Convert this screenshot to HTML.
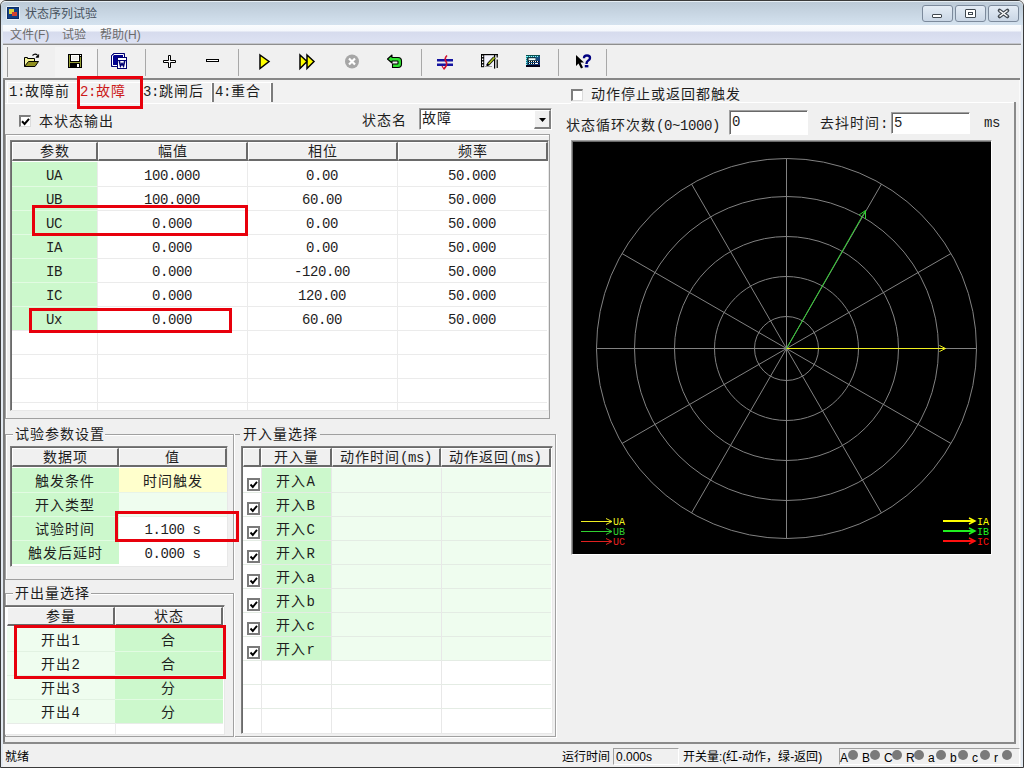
<!DOCTYPE html><html lang="zh-CN"><head><meta charset="utf-8"><style>
*{box-sizing:border-box;margin:0;padding:0}
html,body{width:1024px;height:768px;overflow:hidden;background:#f0f0f0}
body{position:relative;font-family:"Liberation Sans",sans-serif;font-size:12px;color:#000}
.a{position:absolute}
.s{position:absolute;font-family:"Liberation Mono",monospace;font-size:14px;letter-spacing:1px;line-height:16px;white-space:nowrap;color:#1e1e1e}
.s i{font-style:normal;font-size:14px;letter-spacing:-0.4px;position:relative;top:-0.5px}
.y{position:absolute;font-family:"Liberation Sans",sans-serif;font-size:12px;line-height:14px;white-space:nowrap}
.c{text-align:center;text-indent:-1px}
.red{position:absolute;border:3px solid #e8000c}
svg{position:absolute;overflow:visible}
</style></head><body>
<div class="a" style="left:0px;top:0px;width:1024px;height:768px;border:1px solid #3a3a3a;border-radius:6px 6px 0 0;background:#f0f0f0"></div>
<div class="a" style="left:1px;top:1px;width:1022px;height:24px;border-radius:5px 5px 0 0;background:linear-gradient(#bccad7,#d4e2ef);border-top:1px solid #e6eef4"></div>
<div class="a" style="left:1px;top:25px;width:2px;height:742px;background:#e2e9f1"></div>
<div class="a" style="left:1021px;top:25px;width:2px;height:742px;background:#e2e9f1"></div>
<div class="a" style="left:6px;top:6px;width:14px;height:14px;background:#e8f0f8;border-radius:2px"></div>
<div class="a" style="left:7px;top:7px;width:12px;height:12px;background:#123f86;border:1px solid #0b2e66"></div>
<div class="a" style="left:9px;top:9px;width:5px;height:5px;background:#d8d040"></div>
<div class="a" style="left:12px;top:12px;width:5px;height:4px;background:#d04030"></div>
<div class="y" style="left:25px;top:7px;color:#47525e">状态序列试验</div>
<div class="a" style="left:922px;top:5px;width:31px;height:17px;border:1px solid #7c8a9c;border-radius:3px;background:linear-gradient(#e4ecf5,#c9d6e5)"></div>
<div class="a" style="left:955px;top:5px;width:31px;height:17px;border:1px solid #7c8a9c;border-radius:3px;background:linear-gradient(#e4ecf5,#c9d6e5)"></div>
<div class="a" style="left:988px;top:5px;width:31px;height:17px;border:1px solid #7c8a9c;border-radius:3px;background:linear-gradient(#e4ecf5,#c9d6e5)"></div>
<div class="a" style="left:932px;top:14px;width:10px;height:4px;border:1px solid #404850;background:#fff;border-radius:1px"></div>
<div class="a" style="left:965px;top:9px;width:11px;height:9px;border:1px solid #404850;background:#fff;border-radius:1px"></div>
<div class="a" style="left:968px;top:12px;width:5px;height:3px;border:1px solid #404850"></div>
<svg style="left:996px;top:7px" width="16" height="13" viewBox="0 0 16 13"><path d="M3.5 3.5 L11.5 9.5 M11.5 3.5 L3.5 9.5" stroke="#404850" stroke-width="3.6" stroke-linecap="round"/><path d="M3.5 3.5 L11.5 9.5 M11.5 3.5 L3.5 9.5" stroke="#fff" stroke-width="1.5"/></svg>
<div class="a" style="left:3px;top:25px;width:1018px;height:19px;background:linear-gradient(#fafcfe 0,#f4f7fc 6px,#d6dbed 7px,#dee3f4 100%)"></div>
<div class="a" style="left:3px;top:43px;width:1018px;height:1px;background:#c4c6cc"></div>
<div class="a" style="left:3px;top:44px;width:1018px;height:1px;background:#8e8e8e"></div>
<div class="y" style="left:10px;top:28px;color:#6b6b6b">文件(F)</div>
<div class="y" style="left:62px;top:28px;color:#6b6b6b">试验</div>
<div class="y" style="left:100px;top:28px;color:#6b6b6b">帮助(H)</div>
<div class="a" style="left:3px;top:45px;width:1018px;height:33px;background:#f0f0f0"></div>
<div class="a" style="left:7px;top:47px;width:1px;height:30px;background:#9a9a9a"></div>
<div class="a" style="left:3px;top:78px;width:1017px;height:2px;background:#878787"></div>
<div class="a" style="left:97px;top:49px;width:1px;height:27px;background:#a8a8a8"></div>
<div class="a" style="left:145px;top:49px;width:1px;height:27px;background:#a8a8a8"></div>
<div class="a" style="left:238px;top:49px;width:1px;height:27px;background:#a8a8a8"></div>
<div class="a" style="left:421px;top:49px;width:1px;height:27px;background:#a8a8a8"></div>
<div class="a" style="left:558px;top:49px;width:1px;height:27px;background:#a8a8a8"></div>
<div class="a" style="left:606px;top:49px;width:1px;height:27px;background:#a8a8a8"></div>
<div class="a" style="left:55px;top:47px;width:42px;height:30px;background:#f4f4f4"></div>
<svg style="left:23px;top:53px" width="18" height="15" viewBox="0 0 18 15"><path d="M1.5 13.5V4.5H4.5V5.5H11.5V8.5" fill="#f4f49a" stroke="#000"/><path d="M1.5 13.5L5.5 8.5H15.5L12 13.5Z" fill="#909020" stroke="#000"/><path d="M9.5 2.5Q12 0 14.5 2.2" fill="none" stroke="#000" stroke-width="1.1"/><path d="M13 4.3H15.6V1.6Z" fill="#000" stroke="#000" stroke-width="0.8"/></svg>
<svg style="left:68px;top:54px" width="14" height="14" viewBox="0 0 14 14"><rect x="0" y="0" width="14" height="14" fill="#000"/><rect x="1" y="1" width="1" height="12" fill="#98a038"/><rect x="12" y="3" width="1" height="10" fill="#98a038"/><rect x="2" y="8" width="10" height="1" fill="#98a038"/><rect x="3" y="1" width="8" height="6" fill="#fff"/><rect x="4" y="2" width="6" height="4" fill="#eeeeea"/><rect x="9" y="10" width="2" height="3" fill="#fff"/><rect x="12" y="1" width="1" height="1" fill="#fff"/></svg>
<svg style="left:111px;top:53px" width="16" height="16" viewBox="0 0 16 16"><path d="M2.5 0.5H13.5V13.5H0.5V2.5Z" fill="#000090" stroke="#000070"/><path d="M3 1.5H12.5V12.5H1.5V3Z" fill="none" stroke="#fff" stroke-width="1"/><rect x="6" y="4" width="10" height="12" fill="#000070"/><rect x="7" y="5" width="8" height="2" fill="#fff"/><rect x="7" y="8" width="8" height="7" fill="#fff"/><path d="M8.3 8 L9.5 13 L11 10.5 L12.5 13 L13.7 8" fill="none" stroke="#000070" stroke-width="1.6"/></svg>
<svg style="left:163px;top:55px" width="13" height="13" viewBox="0 0 13 13"><path d="M5.5 0.5h2v5h5v2h-5v5h-2v-5h-5v-2h5z" fill="#fff" stroke="#000" stroke-width="1"/></svg>
<svg style="left:206px;top:59px" width="13" height="3" viewBox="0 0 13 3"><rect x="0.5" y="0.5" width="12" height="2" fill="#fff" stroke="#000"/></svg>
<svg style="left:259px;top:54px" width="11" height="16" viewBox="0 0 11 16"><path d="M1 1 L10 7.5 L1 14.5Z" fill="#ffff00" stroke="#000" stroke-width="1.5"/></svg>
<svg style="left:299px;top:54px" width="17" height="16" viewBox="0 0 17 16"><path d="M1 1 L8 7.5 L1 14.5Z M8 1 L15 7.5 L8 14.5Z" fill="#ffff00" stroke="#000" stroke-width="1.5"/></svg>
<svg style="left:344px;top:54px" width="16" height="16" viewBox="0 0 16 16"><circle cx="8" cy="7.5" r="7" fill="#a6a6a6"/><path d="M5 4.5l6 6M11 4.5l-6 6" stroke="#fff" stroke-width="2.2"/></svg>
<svg style="left:387px;top:54px" width="16" height="15" viewBox="0 0 16 15"><path d="M0.5 5 L5 1 L5 3.5 L11 3.5 Q14.5 3.5 14.5 7 L14.5 10 Q14.5 13.5 11 13.5 L5.5 13.5 L5.5 10 L10.5 10 Q11 10 11 9.5 L11 7.5 Q11 7 10.5 7 L5 7 L5 9 Z" fill="#30e030" stroke="#000" stroke-width="1.1" stroke-linejoin="round"/></svg>
<svg style="left:437px;top:55px" width="17" height="15" viewBox="0 0 17 15"><rect x="0" y="4" width="16" height="2.5" fill="#1414a0"/><rect x="0" y="8.5" width="16" height="2.5" fill="#1414a0"/><path d="M10 0.5q-3 3 -1 6t-2 7.5" fill="none" stroke="#d01030" stroke-width="1.6"/><path d="M5 11l2 3l2-3" fill="none" stroke="#d01030" stroke-width="1.2"/></svg>
<svg style="left:481px;top:54px" width="17" height="15" viewBox="0 0 17 15"><rect x="3" y="1" width="10.5" height="12" fill="#f2f2fc"/><rect x="0" y="0" width="17" height="1.2" fill="#000"/><rect x="0" y="0" width="3.2" height="13.2" fill="#000"/><rect x="1" y="1.5" width="1.3" height="1.6" fill="#fff"/><rect x="1" y="4.5" width="1.3" height="1.6" fill="#fff"/><rect x="1" y="7.5" width="1.3" height="1.6" fill="#fff"/><rect x="1" y="10.5" width="1.3" height="1.6" fill="#fff"/><rect x="13" y="0" width="1.2" height="14.6" fill="#000"/><rect x="15.6" y="0" width="1.2" height="3.5" fill="#000"/><rect x="15.6" y="5.5" width="1.2" height="8.5" fill="#000"/><path d="M7 10.5 L13.5 3.5" stroke="#000" stroke-width="3.2"/><path d="M7.5 10 L13.5 3.5" stroke="#a8c020" stroke-width="1.8"/><circle cx="6.6" cy="11" r="1.3" fill="#000"/><rect x="4" y="12" width="7" height="1" fill="#9a9a9a"/></svg>
<svg style="left:526px;top:55px" width="14" height="12" viewBox="0 0 14 12"><defs><linearGradient id="cg" x1="0" y1="0" x2="1" y2="1"><stop offset="0" stop-color="#1a9090"/><stop offset="1" stop-color="#101a70"/></linearGradient></defs><rect x="0" y="0" width="14" height="12" fill="url(#cg)"/><rect x="0" y="0" width="14" height="1" fill="#0a5050"/><path d="M1 1.5h12" stroke="#8ff" stroke-dasharray="1 1"/><path d="M0.5 1v10" stroke="#7ee" stroke-dasharray="1 1"/><rect x="1.5" y="2.5" width="8" height="3" fill="#000"/><rect x="2.5" y="3.2" width="7" height="2" fill="#f0ffff"/><path d="M2 6.5h11M2 8.5h11" stroke="#000"/><path d="M3 6.5h9M3 8.5h6" stroke="#fff" stroke-dasharray="1 1"/><path d="M9 8.5h3" stroke="#fff"/><rect x="0" y="10" width="14" height="2" fill="#000018"/></svg>
<svg style="left:575px;top:54px" width="17" height="16" viewBox="0 0 17 16"><path d="M1 1 L1 12 L3.5 9.5 L6 14.5 L8 13.5 L5.5 8.5 L9 8.5 Z" fill="#000"/><path d="M9 4.2 Q9 1.5 12 1.5 Q15 1.5 15 4 Q15 5.8 13 6.8 Q11.5 7.6 11.5 10" fill="none" stroke="#000080" stroke-width="2.4"/><rect x="9.8" y="11" width="3.6" height="2.4" fill="#000080"/></svg>
<div class="a" style="left:3px;top:80px;width:1017px;height:23px;background:#f2f2f2"></div>
<div class="a" style="left:7px;top:82px;width:265px;height:21px;border-top:1px solid #fff;border-left:1px solid #fff"></div>
<div class="s" style="left:9px;top:84px;"><i>1:</i>故障前</div>
<div class="s" style="left:80px;top:84px;color:#cc1a1a"><i>2:</i>故障</div>
<div class="s" style="left:143px;top:84px;"><i>3:</i>跳闸后</div>
<div class="s" style="left:215px;top:84px;"><i>4:</i>重合</div>
<div class="a" style="left:211px;top:83px;width:1px;height:19px;background:#fff"></div>
<div class="a" style="left:212px;top:83px;width:2px;height:19px;background:#7c7c7c"></div>
<div class="a" style="left:270px;top:83px;width:1px;height:19px;background:#fff"></div>
<div class="a" style="left:271px;top:83px;width:2px;height:19px;background:#7c7c7c"></div>
<div class="a" style="left:3px;top:103px;width:568px;height:1px;background:#fff"></div>
<div class="a" style="left:3px;top:80px;width:2px;height:662px;background:#7a7a7a"></div>
<div class="red" style="left:77px;top:76px;width:66px;height:33px"></div>
<div class="a" style="left:19px;top:115px;width:12px;height:12px;border-top:2px solid #7e7e7e;border-left:2px solid #7e7e7e;border-right:1px solid #dcdcdc;border-bottom:1px solid #dcdcdc;background:#fff"></div>
<svg style="left:21px;top:117px" width="9" height="9" viewBox="0 0 9 9"><path d="M1 4.2l2.6 2.8l4.4-5.2" fill="none" stroke="#000" stroke-width="2"/></svg>
<div class="s" style="left:39px;top:114px;">本状态输出</div>
<div class="s" style="left:362px;top:113px;">状态名</div>
<div class="a" style="left:419px;top:108px;width:133px;height:22px;border-top:1px solid #a0a0a0;border-left:1px solid #a0a0a0;border-bottom:1px solid #fff;border-right:1px solid #fff;box-shadow:inset 1px 1px 0 #696969;background:#fff"></div>
<div class="s" style="left:422px;top:111px;">故障</div>
<div class="a" style="left:534px;top:110px;width:17px;height:19px;background:#f0f0f0;border-top:1px solid #fff;border-left:1px solid #fff;border-right:2px solid #808080;border-bottom:2px solid #808080"></div>
<svg style="left:539px;top:118px" width="8" height="4" viewBox="0 0 8 4"><path d="M0 0h7l-3.5 4z" fill="#000"/></svg>
<div class="a" style="left:5px;top:134px;width:545px;height:285px;border:1px solid #a0a0a0;box-shadow:inset 1px 1px 0 #fff"></div>
<div class="a" style="left:10px;top:140px;width:539px;height:271px;border-top:1px solid #7c7c7c;border-left:1px solid #7c7c7c;border-bottom:1px solid #e8e8e8;border-right:1px solid #e8e8e8;box-shadow:inset 1px 1px 0 #6a6a6a;background:#fff"></div>
<div class="a" style="left:12px;top:142px;width:86px;height:19px;background:#f0f0f0;border-top:1px solid #fff;border-left:1px solid #fff;border-right:2px solid #6a6a6a;border-bottom:2px solid #6a6a6a"></div>
<div class="s c" style="left:12px;top:144px;width:86px;">参数</div>
<div class="a" style="left:98px;top:142px;width:150px;height:19px;background:#f0f0f0;border-top:1px solid #fff;border-left:1px solid #fff;border-right:2px solid #6a6a6a;border-bottom:2px solid #6a6a6a"></div>
<div class="s c" style="left:98px;top:144px;width:150px;">幅值</div>
<div class="a" style="left:248px;top:142px;width:150px;height:19px;background:#f0f0f0;border-top:1px solid #fff;border-left:1px solid #fff;border-right:2px solid #6a6a6a;border-bottom:2px solid #6a6a6a"></div>
<div class="s c" style="left:248px;top:144px;width:150px;">相位</div>
<div class="a" style="left:398px;top:142px;width:150px;height:19px;background:#f0f0f0;border-top:1px solid #fff;border-left:1px solid #fff;border-right:2px solid #6a6a6a;border-bottom:2px solid #6a6a6a"></div>
<div class="s c" style="left:398px;top:144px;width:150px;">频率</div>
<div class="a" style="left:12px;top:162px;width:85px;height:24px;background:#ccf8cc"></div>
<div class="a" style="left:12px;top:186px;width:85px;height:24px;background:#ccf8cc"></div>
<div class="a" style="left:12px;top:210px;width:85px;height:24px;background:#ccf8cc"></div>
<div class="a" style="left:12px;top:234px;width:85px;height:24px;background:#ccf8cc"></div>
<div class="a" style="left:12px;top:258px;width:85px;height:24px;background:#ccf8cc"></div>
<div class="a" style="left:12px;top:282px;width:85px;height:24px;background:#ccf8cc"></div>
<div class="a" style="left:12px;top:306px;width:85px;height:24px;background:#ccf8cc"></div>
<div class="a" style="left:12px;top:186px;width:535px;height:1px;background:#ebebeb"></div>
<div class="a" style="left:12px;top:186px;width:85px;height:1px;background:#e2fbe2"></div>
<div class="a" style="left:12px;top:210px;width:535px;height:1px;background:#ebebeb"></div>
<div class="a" style="left:12px;top:210px;width:85px;height:1px;background:#e2fbe2"></div>
<div class="a" style="left:12px;top:234px;width:535px;height:1px;background:#ebebeb"></div>
<div class="a" style="left:12px;top:234px;width:85px;height:1px;background:#e2fbe2"></div>
<div class="a" style="left:12px;top:258px;width:535px;height:1px;background:#ebebeb"></div>
<div class="a" style="left:12px;top:258px;width:85px;height:1px;background:#e2fbe2"></div>
<div class="a" style="left:12px;top:282px;width:535px;height:1px;background:#ebebeb"></div>
<div class="a" style="left:12px;top:282px;width:85px;height:1px;background:#e2fbe2"></div>
<div class="a" style="left:12px;top:306px;width:535px;height:1px;background:#ebebeb"></div>
<div class="a" style="left:12px;top:306px;width:85px;height:1px;background:#e2fbe2"></div>
<div class="a" style="left:12px;top:330px;width:535px;height:1px;background:#ebebeb"></div>
<div class="a" style="left:12px;top:354px;width:535px;height:1px;background:#ebebeb"></div>
<div class="a" style="left:12px;top:378px;width:535px;height:1px;background:#ebebeb"></div>
<div class="a" style="left:12px;top:402px;width:535px;height:1px;background:#ebebeb"></div>
<div class="a" style="left:97px;top:162px;width:1px;height:248px;background:#ebebeb"></div>
<div class="a" style="left:247px;top:162px;width:1px;height:248px;background:#ebebeb"></div>
<div class="a" style="left:397px;top:162px;width:1px;height:248px;background:#ebebeb"></div>
<div class="s c" style="left:12px;top:168px;width:85px;"><i>UA</i></div>
<div class="s c" style="left:98px;top:168px;width:149px;"><i>100.000</i></div>
<div class="s c" style="left:248px;top:168px;width:149px;"><i>0.00</i></div>
<div class="s c" style="left:398px;top:168px;width:149px;"><i>50.000</i></div>
<div class="s c" style="left:12px;top:192px;width:85px;"><i>UB</i></div>
<div class="s c" style="left:98px;top:192px;width:149px;"><i>100.000</i></div>
<div class="s c" style="left:248px;top:192px;width:149px;"><i>60.00</i></div>
<div class="s c" style="left:398px;top:192px;width:149px;"><i>50.000</i></div>
<div class="s c" style="left:12px;top:216px;width:85px;"><i>UC</i></div>
<div class="s c" style="left:98px;top:216px;width:149px;"><i>0.000</i></div>
<div class="s c" style="left:248px;top:216px;width:149px;"><i>0.00</i></div>
<div class="s c" style="left:398px;top:216px;width:149px;"><i>50.000</i></div>
<div class="s c" style="left:12px;top:240px;width:85px;"><i>IA</i></div>
<div class="s c" style="left:98px;top:240px;width:149px;"><i>0.000</i></div>
<div class="s c" style="left:248px;top:240px;width:149px;"><i>0.00</i></div>
<div class="s c" style="left:398px;top:240px;width:149px;"><i>50.000</i></div>
<div class="s c" style="left:12px;top:264px;width:85px;"><i>IB</i></div>
<div class="s c" style="left:98px;top:264px;width:149px;"><i>0.000</i></div>
<div class="s c" style="left:248px;top:264px;width:149px;"><i>-120.00</i></div>
<div class="s c" style="left:398px;top:264px;width:149px;"><i>50.000</i></div>
<div class="s c" style="left:12px;top:288px;width:85px;"><i>IC</i></div>
<div class="s c" style="left:98px;top:288px;width:149px;"><i>0.000</i></div>
<div class="s c" style="left:248px;top:288px;width:149px;"><i>120.00</i></div>
<div class="s c" style="left:398px;top:288px;width:149px;"><i>50.000</i></div>
<div class="s c" style="left:12px;top:312px;width:85px;"><i>Ux</i></div>
<div class="s c" style="left:98px;top:312px;width:149px;"><i>0.000</i></div>
<div class="s c" style="left:248px;top:312px;width:149px;"><i>60.00</i></div>
<div class="s c" style="left:398px;top:312px;width:149px;"><i>50.000</i></div>
<div class="red" style="left:32px;top:205px;width:216px;height:31px"></div>
<div class="red" style="left:29px;top:308px;width:203px;height:25px"></div>
<div class="a" style="left:5px;top:434px;width:229px;height:146px;border:1px solid #a0a0a0;box-shadow:inset 1px 1px 0 #fff,1px 0 0 #fff"></div>
<div class="a" style="left:13px;top:427px;width:92px;height:16px;background:#f0f0f0"></div>
<div class="s" style="left:15px;top:427px;">试验参数设置</div>
<div class="a" style="left:10px;top:446px;width:218px;height:121px;border-top:1px solid #7c7c7c;border-left:1px solid #7c7c7c;border-bottom:1px solid #e8e8e8;border-right:1px solid #e8e8e8;box-shadow:inset 1px 1px 0 #6a6a6a;background:#fff"></div>
<div class="a" style="left:12px;top:448px;width:107px;height:19px;background:#f0f0f0;border-top:1px solid #fff;border-left:1px solid #fff;border-right:2px solid #6a6a6a;border-bottom:2px solid #6a6a6a"></div>
<div class="s c" style="left:12px;top:450px;width:107px;">数据项</div>
<div class="a" style="left:119px;top:448px;width:108px;height:19px;background:#f0f0f0;border-top:1px solid #fff;border-left:1px solid #fff;border-right:2px solid #6a6a6a;border-bottom:2px solid #6a6a6a"></div>
<div class="s c" style="left:119px;top:450px;width:108px;">值</div>
<div class="a" style="left:12px;top:468px;width:107px;height:24px;background:#ccf8cc"></div>
<div class="a" style="left:119px;top:468px;width:108px;height:24px;background:#ffffcc"></div>
<div class="s c" style="left:12px;top:474px;width:107px;">触发条件</div>
<div class="s c" style="left:119px;top:474px;width:108px;">时间触发</div>
<div class="a" style="left:12px;top:492px;width:107px;height:24px;background:#ccf8cc"></div>
<div class="a" style="left:119px;top:492px;width:108px;height:24px;background:#effdef"></div>
<div class="a" style="left:12px;top:492px;width:107px;height:1px;background:#e2fbe2"></div>
<div class="a" style="left:119px;top:492px;width:108px;height:1px;background:#e8f4e8"></div>
<div class="s c" style="left:12px;top:498px;width:107px;">开入类型</div>
<div class="s c" style="left:119px;top:498px;width:108px;"></div>
<div class="a" style="left:12px;top:516px;width:107px;height:24px;background:#ccf8cc"></div>
<div class="a" style="left:119px;top:516px;width:108px;height:24px;background:#fff"></div>
<div class="a" style="left:12px;top:516px;width:107px;height:1px;background:#e2fbe2"></div>
<div class="a" style="left:119px;top:516px;width:108px;height:1px;background:#e8f4e8"></div>
<div class="s c" style="left:12px;top:522px;width:107px;">试验时间</div>
<div class="s c" style="left:119px;top:522px;width:108px;"><i>1.100 s</i></div>
<div class="a" style="left:12px;top:540px;width:107px;height:24px;background:#ccf8cc"></div>
<div class="a" style="left:119px;top:540px;width:108px;height:24px;background:#fff"></div>
<div class="a" style="left:12px;top:540px;width:107px;height:1px;background:#e2fbe2"></div>
<div class="a" style="left:119px;top:540px;width:108px;height:1px;background:#ebebeb"></div>
<div class="s c" style="left:12px;top:546px;width:107px;">触发后延时</div>
<div class="s c" style="left:119px;top:546px;width:108px;"><i>0.000 s</i></div>
<div class="red" style="left:115px;top:511px;width:124px;height:31px"></div>
<div class="a" style="left:5px;top:593px;width:229px;height:144px;border:1px solid #a0a0a0;box-shadow:inset 1px 1px 0 #fff,1px 0 0 #fff"></div>
<div class="a" style="left:13px;top:585px;width:78px;height:16px;background:#f0f0f0"></div>
<div class="s" style="left:15px;top:586px;">开出量选择</div>
<div class="a" style="left:5px;top:605px;width:220px;height:130px;border-top:1px solid #7c7c7c;border-bottom:1px solid #e8e8e8;border-right:1px solid #e8e8e8;box-shadow:inset 0 1px 0 #6a6a6a;background:#fff"></div>
<div class="a" style="left:7px;top:607px;width:108px;height:19px;background:#f0f0f0;border-top:1px solid #fff;border-left:1px solid #fff;border-right:2px solid #6a6a6a;border-bottom:2px solid #6a6a6a"></div>
<div class="s c" style="left:7px;top:609px;width:108px;">参量</div>
<div class="a" style="left:115px;top:607px;width:108px;height:19px;background:#f0f0f0;border-top:1px solid #fff;border-left:1px solid #fff;border-right:2px solid #6a6a6a;border-bottom:2px solid #6a6a6a"></div>
<div class="s c" style="left:115px;top:609px;width:108px;">状态</div>
<div class="a" style="left:7px;top:627px;width:108px;height:24px;background:#effdef"></div>
<div class="a" style="left:115px;top:627px;width:108px;height:24px;background:#ccf8cc"></div>
<div class="s c" style="left:7px;top:633px;width:108px;">开出<i>1</i></div>
<div class="s c" style="left:115px;top:633px;width:108px;">合</div>
<div class="a" style="left:7px;top:651px;width:108px;height:24px;background:#effdef"></div>
<div class="a" style="left:115px;top:651px;width:108px;height:24px;background:#ccf8cc"></div>
<div class="a" style="left:7px;top:651px;width:108px;height:1px;background:#e2f2e2"></div>
<div class="a" style="left:115px;top:651px;width:108px;height:1px;background:#e2fbe2"></div>
<div class="s c" style="left:7px;top:657px;width:108px;">开出<i>2</i></div>
<div class="s c" style="left:115px;top:657px;width:108px;">合</div>
<div class="a" style="left:7px;top:675px;width:108px;height:24px;background:#effdef"></div>
<div class="a" style="left:115px;top:675px;width:108px;height:24px;background:#ccf8cc"></div>
<div class="a" style="left:7px;top:675px;width:108px;height:1px;background:#e2f2e2"></div>
<div class="a" style="left:115px;top:675px;width:108px;height:1px;background:#e2fbe2"></div>
<div class="s c" style="left:7px;top:681px;width:108px;">开出<i>3</i></div>
<div class="s c" style="left:115px;top:681px;width:108px;">分</div>
<div class="a" style="left:7px;top:699px;width:108px;height:24px;background:#effdef"></div>
<div class="a" style="left:115px;top:699px;width:108px;height:24px;background:#ccf8cc"></div>
<div class="a" style="left:7px;top:699px;width:108px;height:1px;background:#e2f2e2"></div>
<div class="a" style="left:115px;top:699px;width:108px;height:1px;background:#e2fbe2"></div>
<div class="s c" style="left:7px;top:705px;width:108px;">开出<i>4</i></div>
<div class="s c" style="left:115px;top:705px;width:108px;">分</div>
<div class="a" style="left:7px;top:723px;width:216px;height:1px;background:#e8ece8"></div>
<div class="a" style="left:115px;top:723px;width:1px;height:11px;background:#ebebeb"></div>
<div class="red" style="left:14px;top:625px;width:212px;height:54px"></div>
<div class="a" style="left:235px;top:434px;width:321px;height:303px;border-top:1px solid #a0a0a0;border-right:1px solid #a0a0a0;border-bottom:1px solid #a0a0a0;box-shadow:1px 1px 0 #fff"></div>
<div class="a" style="left:240px;top:427px;width:80px;height:16px;background:#f0f0f0"></div>
<div class="s" style="left:243px;top:427px;">开入量选择</div>
<div class="a" style="left:241px;top:446px;width:312px;height:288px;border-top:1px solid #7c7c7c;border-left:1px solid #7c7c7c;border-bottom:1px solid #e8e8e8;border-right:1px solid #e8e8e8;box-shadow:inset 1px 1px 0 #6a6a6a;background:#fff"></div>
<div class="a" style="left:243px;top:448px;width:18px;height:19px;background:#f0f0f0;border-top:1px solid #fff;border-left:1px solid #fff;border-right:2px solid #6a6a6a;border-bottom:2px solid #6a6a6a"></div>
<div class="a" style="left:261px;top:448px;width:71px;height:19px;background:#f0f0f0;border-top:1px solid #fff;border-left:1px solid #fff;border-right:2px solid #6a6a6a;border-bottom:2px solid #6a6a6a"></div>
<div class="s c" style="left:261px;top:450px;width:71px;">开入量</div>
<div class="a" style="left:332px;top:448px;width:109px;height:19px;background:#f0f0f0;border-top:1px solid #fff;border-left:1px solid #fff;border-right:2px solid #6a6a6a;border-bottom:2px solid #6a6a6a"></div>
<div class="s c" style="left:332px;top:450px;width:109px;">动作时间<i>(ms)</i></div>
<div class="a" style="left:441px;top:448px;width:110px;height:19px;background:#f0f0f0;border-top:1px solid #fff;border-left:1px solid #fff;border-right:2px solid #6a6a6a;border-bottom:2px solid #6a6a6a"></div>
<div class="s c" style="left:441px;top:450px;width:110px;">动作返回<i>(ms)</i></div>
<div class="a" style="left:261px;top:468px;width:70px;height:24px;background:#ccf8cc"></div>
<div class="a" style="left:331px;top:468px;width:220px;height:24px;background:#effdef"></div>
<div class="s c" style="left:261px;top:474px;width:70px;">开入<i>A</i></div>
<div class="a" style="left:247px;top:478px;width:13px;height:13px;border:2px solid #7a7a7a;background:#fff"></div>
<svg style="left:250px;top:481px" width="8" height="8" viewBox="0 0 8 8"><path d="M0.5 3.5l2.3 2.5l4.2-5.2" fill="none" stroke="#000" stroke-width="1.9"/></svg>
<div class="a" style="left:261px;top:492px;width:70px;height:24px;background:#ccf8cc"></div>
<div class="a" style="left:331px;top:492px;width:220px;height:24px;background:#effdef"></div>
<div class="s c" style="left:261px;top:498px;width:70px;">开入<i>B</i></div>
<div class="a" style="left:247px;top:502px;width:13px;height:13px;border:2px solid #7a7a7a;background:#fff"></div>
<svg style="left:250px;top:505px" width="8" height="8" viewBox="0 0 8 8"><path d="M0.5 3.5l2.3 2.5l4.2-5.2" fill="none" stroke="#000" stroke-width="1.9"/></svg>
<div class="a" style="left:261px;top:516px;width:70px;height:24px;background:#ccf8cc"></div>
<div class="a" style="left:331px;top:516px;width:220px;height:24px;background:#effdef"></div>
<div class="s c" style="left:261px;top:522px;width:70px;">开入<i>C</i></div>
<div class="a" style="left:247px;top:526px;width:13px;height:13px;border:2px solid #7a7a7a;background:#fff"></div>
<svg style="left:250px;top:529px" width="8" height="8" viewBox="0 0 8 8"><path d="M0.5 3.5l2.3 2.5l4.2-5.2" fill="none" stroke="#000" stroke-width="1.9"/></svg>
<div class="a" style="left:261px;top:540px;width:70px;height:24px;background:#ccf8cc"></div>
<div class="a" style="left:331px;top:540px;width:220px;height:24px;background:#effdef"></div>
<div class="s c" style="left:261px;top:546px;width:70px;">开入<i>R</i></div>
<div class="a" style="left:247px;top:550px;width:13px;height:13px;border:2px solid #7a7a7a;background:#fff"></div>
<svg style="left:250px;top:553px" width="8" height="8" viewBox="0 0 8 8"><path d="M0.5 3.5l2.3 2.5l4.2-5.2" fill="none" stroke="#000" stroke-width="1.9"/></svg>
<div class="a" style="left:261px;top:564px;width:70px;height:24px;background:#ccf8cc"></div>
<div class="a" style="left:331px;top:564px;width:220px;height:24px;background:#effdef"></div>
<div class="s c" style="left:261px;top:570px;width:70px;">开入<i>a</i></div>
<div class="a" style="left:247px;top:574px;width:13px;height:13px;border:2px solid #7a7a7a;background:#fff"></div>
<svg style="left:250px;top:577px" width="8" height="8" viewBox="0 0 8 8"><path d="M0.5 3.5l2.3 2.5l4.2-5.2" fill="none" stroke="#000" stroke-width="1.9"/></svg>
<div class="a" style="left:261px;top:588px;width:70px;height:24px;background:#ccf8cc"></div>
<div class="a" style="left:331px;top:588px;width:220px;height:24px;background:#effdef"></div>
<div class="s c" style="left:261px;top:594px;width:70px;">开入<i>b</i></div>
<div class="a" style="left:247px;top:598px;width:13px;height:13px;border:2px solid #7a7a7a;background:#fff"></div>
<svg style="left:250px;top:601px" width="8" height="8" viewBox="0 0 8 8"><path d="M0.5 3.5l2.3 2.5l4.2-5.2" fill="none" stroke="#000" stroke-width="1.9"/></svg>
<div class="a" style="left:261px;top:612px;width:70px;height:24px;background:#ccf8cc"></div>
<div class="a" style="left:331px;top:612px;width:220px;height:24px;background:#effdef"></div>
<div class="s c" style="left:261px;top:618px;width:70px;">开入<i>c</i></div>
<div class="a" style="left:247px;top:622px;width:13px;height:13px;border:2px solid #7a7a7a;background:#fff"></div>
<svg style="left:250px;top:625px" width="8" height="8" viewBox="0 0 8 8"><path d="M0.5 3.5l2.3 2.5l4.2-5.2" fill="none" stroke="#000" stroke-width="1.9"/></svg>
<div class="a" style="left:261px;top:636px;width:70px;height:24px;background:#ccf8cc"></div>
<div class="a" style="left:331px;top:636px;width:220px;height:24px;background:#effdef"></div>
<div class="s c" style="left:261px;top:642px;width:70px;">开入<i>r</i></div>
<div class="a" style="left:247px;top:646px;width:13px;height:13px;border:2px solid #7a7a7a;background:#fff"></div>
<svg style="left:250px;top:649px" width="8" height="8" viewBox="0 0 8 8"><path d="M0.5 3.5l2.3 2.5l4.2-5.2" fill="none" stroke="#000" stroke-width="1.9"/></svg>
<div class="a" style="left:243px;top:492px;width:308px;height:1px;background:#e4ece4"></div>
<div class="a" style="left:243px;top:516px;width:308px;height:1px;background:#e4ece4"></div>
<div class="a" style="left:243px;top:540px;width:308px;height:1px;background:#e4ece4"></div>
<div class="a" style="left:243px;top:564px;width:308px;height:1px;background:#e4ece4"></div>
<div class="a" style="left:243px;top:588px;width:308px;height:1px;background:#e4ece4"></div>
<div class="a" style="left:243px;top:612px;width:308px;height:1px;background:#e4ece4"></div>
<div class="a" style="left:243px;top:636px;width:308px;height:1px;background:#e4ece4"></div>
<div class="a" style="left:243px;top:660px;width:308px;height:1px;background:#e4ece4"></div>
<div class="a" style="left:243px;top:684px;width:308px;height:1px;background:#e4ece4"></div>
<div class="a" style="left:243px;top:708px;width:308px;height:1px;background:#e4ece4"></div>
<div class="a" style="left:261px;top:468px;width:1px;height:266px;background:#e8e8e8"></div>
<div class="a" style="left:331px;top:468px;width:1px;height:266px;background:#e8e8e8"></div>
<div class="a" style="left:441px;top:468px;width:1px;height:266px;background:#e8e8e8"></div>
<div class="a" style="left:571px;top:89px;width:12px;height:12px;border-top:2px solid #7e7e7e;border-left:2px solid #7e7e7e;border-right:1px solid #dcdcdc;border-bottom:1px solid #dcdcdc;background:#fff"></div>
<div class="s" style="left:591px;top:87px;">动作停止或返回都触发</div>
<div class="a" style="left:571px;top:102px;width:443px;height:640px;border-top:1px solid #fff"></div>
<div class="s" style="left:566px;top:118px;">状态循环次数<i>(0~1000)</i></div>
<div class="a" style="left:729px;top:110px;width:79px;height:25px;border-top:1px solid #a0a0a0;border-left:1px solid #a0a0a0;border-bottom:1px solid #fff;border-right:1px solid #fff;box-shadow:inset 1px 1px 0 #696969;background:#fff"></div>
<div class="s" style="left:732px;top:114px;"><i>0</i></div>
<div class="s" style="left:820px;top:116px;">去抖时间<i>:</i></div>
<div class="a" style="left:891px;top:112px;width:79px;height:22px;border-top:1px solid #a0a0a0;border-left:1px solid #a0a0a0;border-bottom:1px solid #fff;border-right:1px solid #fff;box-shadow:inset 1px 1px 0 #696969;background:#fff"></div>
<div class="s" style="left:894px;top:115px;"><i>5</i></div>
<div class="s" style="left:984px;top:115px;"><i>ms</i></div>
<div class="a" style="left:571px;top:140px;width:421px;height:415px;background:#000;border-top:1px solid #a0a0a0;border-left:1px solid #a0a0a0;border-bottom:1px solid #fff;border-right:1px solid #fff;box-shadow:inset 1px 1px 0 #696969"></div>
<svg style="left:571px;top:140px" width="421" height="415" viewBox="0 0 421 415"><circle cx="215.5" cy="208.5" r="32" fill="none" stroke="#828282" stroke-width="1"/><circle cx="215.5" cy="208.5" r="72" fill="none" stroke="#828282" stroke-width="1"/><circle cx="215.5" cy="208.5" r="112" fill="none" stroke="#828282" stroke-width="1"/><circle cx="215.5" cy="208.5" r="152" fill="none" stroke="#828282" stroke-width="1"/><circle cx="215.5" cy="208.5" r="190" fill="none" stroke="#828282" stroke-width="1"/><line x1="215.5" y1="208.5" x2="405.50" y2="208.50" stroke="#828282" stroke-width="1"/><line x1="215.5" y1="208.5" x2="380.04" y2="113.50" stroke="#828282" stroke-width="1"/><line x1="215.5" y1="208.5" x2="310.50" y2="43.96" stroke="#828282" stroke-width="1"/><line x1="215.5" y1="208.5" x2="215.50" y2="18.50" stroke="#828282" stroke-width="1"/><line x1="215.5" y1="208.5" x2="120.50" y2="43.96" stroke="#828282" stroke-width="1"/><line x1="215.5" y1="208.5" x2="50.96" y2="113.50" stroke="#828282" stroke-width="1"/><line x1="215.5" y1="208.5" x2="25.50" y2="208.50" stroke="#828282" stroke-width="1"/><line x1="215.5" y1="208.5" x2="50.96" y2="303.50" stroke="#828282" stroke-width="1"/><line x1="215.5" y1="208.5" x2="120.50" y2="373.04" stroke="#828282" stroke-width="1"/><line x1="215.5" y1="208.5" x2="215.50" y2="398.50" stroke="#828282" stroke-width="1"/><line x1="215.5" y1="208.5" x2="310.50" y2="373.04" stroke="#828282" stroke-width="1"/><line x1="215.5" y1="208.5" x2="380.04" y2="303.50" stroke="#828282" stroke-width="1"/><line x1="215.5" y1="208.5" x2="374.5" y2="208.5" stroke="#f0f020"/><path d="M368.5 205.5 L374.5 208.5 L368.5 211.5" fill="none" stroke="#f0f020"/><line x1="215.5" y1="208.5" x2="294.5" y2="70.5" stroke="#30d030"/><path d="M288.0 75.0 L294.5 70.5 L294.5 79.0" fill="none" stroke="#30d030"/><line x1="10" y1="381.5" x2="41" y2="381.5" stroke="#f0f020"/><path d="M35 378.5 L41 381.5 L35 384.5" fill="none" stroke="#f0f020"/><text x="42" y="384.5" font-family="Liberation Mono" font-size="10.5" fill="#f0f020" textLength="12" lengthAdjust="spacingAndGlyphs">UA</text><line x1="10" y1="391.5" x2="41" y2="391.5" stroke="#30d030"/><path d="M35 388.5 L41 391.5 L35 394.5" fill="none" stroke="#30d030"/><text x="42" y="394.5" font-family="Liberation Mono" font-size="10.5" fill="#30d030" textLength="12" lengthAdjust="spacingAndGlyphs">UB</text><line x1="10" y1="401.5" x2="41" y2="401.5" stroke="#e02020"/><path d="M35 398.5 L41 401.5 L35 404.5" fill="none" stroke="#e02020"/><text x="42" y="404.5" font-family="Liberation Mono" font-size="10.5" fill="#e02020" textLength="12" lengthAdjust="spacingAndGlyphs">UC</text><line x1="372" y1="381" x2="404" y2="381" stroke="#ffff00" stroke-width="2"/><path d="M398 378 L404 381 L398 384" fill="none" stroke="#ffff00" stroke-width="1.5"/><text x="406" y="384.5" font-family="Liberation Mono" font-size="10.5" fill="#ffff00" textLength="12" lengthAdjust="spacingAndGlyphs">IA</text><line x1="372" y1="391" x2="404" y2="391" stroke="#20f020" stroke-width="2"/><path d="M398 388 L404 391 L398 394" fill="none" stroke="#20f020" stroke-width="1.5"/><text x="406" y="394.5" font-family="Liberation Mono" font-size="10.5" fill="#20f020" textLength="12" lengthAdjust="spacingAndGlyphs">IB</text><line x1="372" y1="401" x2="404" y2="401" stroke="#ff1010" stroke-width="2"/><path d="M398 398 L404 401 L398 404" fill="none" stroke="#ff1010" stroke-width="1.5"/><text x="406" y="404.5" font-family="Liberation Mono" font-size="10.5" fill="#ff1010" textLength="12" lengthAdjust="spacingAndGlyphs">IC</text></svg>
<div class="a" style="left:3px;top:742px;width:1013px;height:2px;background:#8a8a8a"></div>
<div class="a" style="left:1014px;top:102px;width:2px;height:642px;background:#8a8a8a"></div>
<div class="a" style="left:1019px;top:80px;width:1px;height:687px;background:#fafafa"></div>
<div class="y" style="left:5px;top:750px;">就绪</div>
<div class="y" style="left:562px;top:750px;">运行时间</div>
<div class="a" style="left:613px;top:748px;width:66px;height:17px;border-top:1px solid #a0a0a0;border-left:1px solid #a0a0a0;border-bottom:1px solid #fff;border-right:1px solid #fff"></div>
<div class="y" style="left:616px;top:750px;">0.000s</div>
<div class="y" style="left:683px;top:750px;">开关量:(红-动作，绿-返回)</div>
<div class="a" style="left:839px;top:748px;width:181px;height:17px;border-top:1px solid #a0a0a0;border-left:1px solid #a0a0a0;border-bottom:1px solid #fff;border-right:1px solid #fff"></div>
<div class="y" style="left:840px;top:751px;">A</div>
<div class="a" style="left:848px;top:750px;width:10px;height:10px;border-radius:50%;background:#7a7a7a"></div>
<div class="y" style="left:862px;top:751px;">B</div>
<div class="a" style="left:870px;top:750px;width:10px;height:10px;border-radius:50%;background:#7a7a7a"></div>
<div class="y" style="left:884px;top:751px;">C</div>
<div class="a" style="left:892px;top:750px;width:10px;height:10px;border-radius:50%;background:#7a7a7a"></div>
<div class="y" style="left:906px;top:751px;">R</div>
<div class="a" style="left:914px;top:750px;width:10px;height:10px;border-radius:50%;background:#7a7a7a"></div>
<div class="y" style="left:928px;top:751px;">a</div>
<div class="a" style="left:936px;top:750px;width:10px;height:10px;border-radius:50%;background:#7a7a7a"></div>
<div class="y" style="left:950px;top:751px;">b</div>
<div class="a" style="left:958px;top:750px;width:10px;height:10px;border-radius:50%;background:#7a7a7a"></div>
<div class="y" style="left:972px;top:751px;">c</div>
<div class="a" style="left:980px;top:750px;width:10px;height:10px;border-radius:50%;background:#7a7a7a"></div>
<div class="y" style="left:994px;top:751px;">r</div>
<div class="a" style="left:1002px;top:750px;width:10px;height:10px;border-radius:50%;background:#7a7a7a"></div>
</body></html>
